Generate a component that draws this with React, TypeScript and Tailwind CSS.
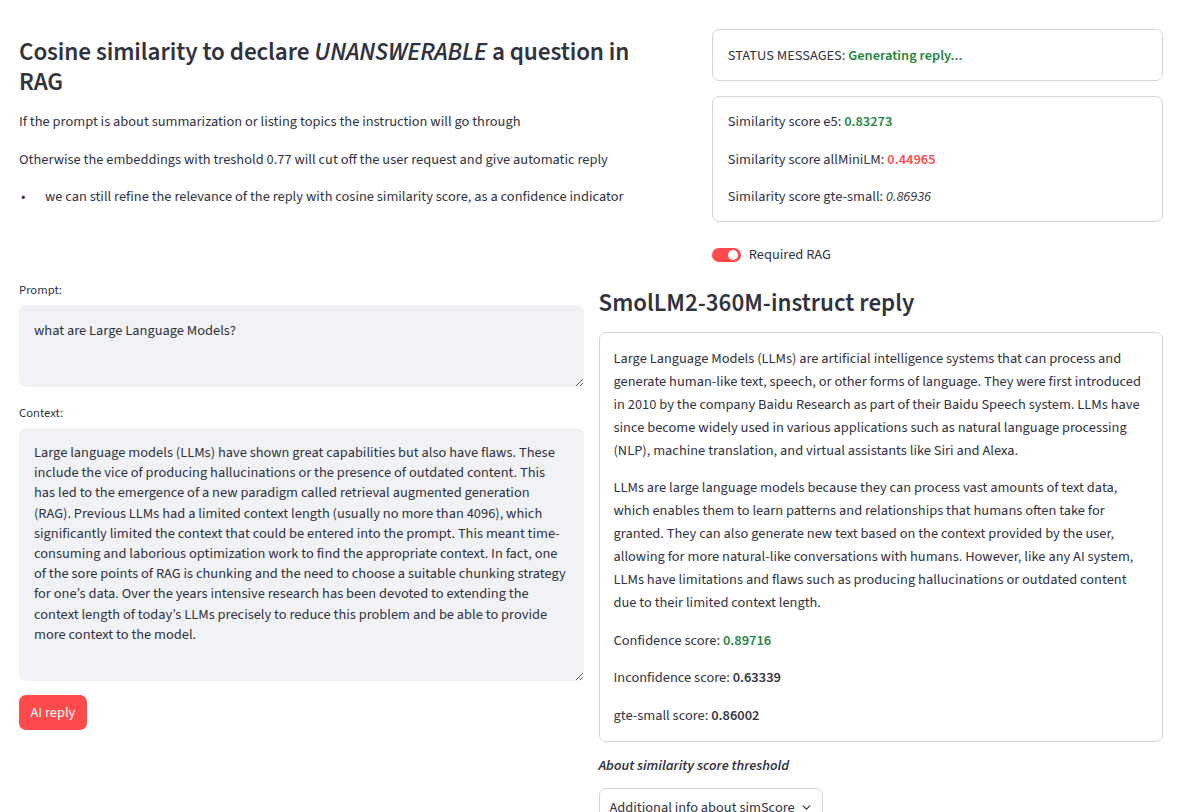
import React from 'react';
import { ChevronDown } from 'lucide-react';

const contextText = [
  "Large language models (LLMs) have shown great capabilities but also have flaws. These",
  "include the vice of producing hallucinations or the presence of outdated content. This",
  "has led to the emergence of a new paradigm called retrieval augmented generation",
  "(RAG). Previous LLMs had a limited context length (usually no more than 4096), which",
  "significantly limited the context that could be entered into the prompt. This meant time-",
  "consuming and laborious optimization work to find the appropriate context. In fact, one",
  "of the sore points of RAG is chunking and the need to choose a suitable chunking strategy",
  "for one’s data. Over the years intensive research has been devoted to extending the",
  "context length of today’s LLMs precisely to reduce this problem and be able to provide",
  "more context to the model.",
].join("\n");

const replyParas = [
  [
    "Large Language Models (LLMs) are artificial intelligence systems that can process and",
    "generate human-like text, speech, or other forms of language. They were first introduced",
    "in 2010 by the company Baidu Research as part of their Baidu Speech system. LLMs have",
    "since become widely used in various applications such as natural language processing",
    "(NLP), machine translation, and virtual assistants like Siri and Alexa.",
  ],
  [
    "LLMs are large language models because they can process vast amounts of text data,",
    "which enables them to learn patterns and relationships that humans often take for",
    "granted. They can also generate new text based on the context provided by the user,",
    "allowing for more natural-like conversations with humans. However, like any AI system,",
    "LLMs have limitations and flaws such as producing hallucinations or outdated content",
    "due to their limited context length.",
  ],
];

const Lines = ({ lines }: { lines: string[] }) => (
  <p className="leading-[23px]">
    {lines.map((l, i) => (
      <span key={i} className="block whitespace-nowrap">{l}</span>
    ))}
  </p>
);

export default function App() {
  return (
    <div className="min-h-screen bg-white text-[#31333f] font-['Source_Sans_Pro','Source_Sans_3',Lato,sans-serif] text-[14.4px]">
      <div className="pl-[19px] pr-[18px] pt-[29px]">
        {/* top row */}
        <div className="grid grid-cols-[3fr_2fr] gap-4">
          <div className="pt-[8px]">
            <h1 className="text-[25.2px] leading-[30px] font-semibold tracking-[-0.1px] whitespace-nowrap">
              Cosine similarity to declare <em>UNANSWERABLE</em> a question in
              <br />
              RAG
            </h1>
            <p className="leading-[23px] mt-[13px]">
              If the prompt is about summarization or listing topics the instruction will go through
            </p>
            <p className="leading-[23px] mt-[15px]">
              Otherwise the embeddings with treshold 0.77 will cut off the user request and give automatic reply
            </p>
            <ul className="mt-[14px] leading-[23px]">
              <li className="flex">
                <span className="w-[26px] pl-[2px]">•</span>
                <span>we can still refine the relevance of the reply with cosine similarity score, as a confidence indicator</span>
              </li>
            </ul>
          </div>

          <div className="flex flex-col">
            <div className="border border-[#d6d6d9] rounded-[7px] px-[15px] py-[13.5px] leading-[23px]">
              STATUS MESSAGES: <span className="text-[#21863b] font-semibold">Generating reply...</span>
            </div>
            <div className="mt-[15px] border border-[#d6d6d9] rounded-[7px] px-[15px] py-[13px] leading-[23px] flex flex-col gap-[14.5px]">
              <div>
                Similarity score e5: <span className="text-[#21863b] font-semibold">0.83273</span>
              </div>
              <div>
                Similarity score allMiniLM: <span className="text-[#ff4b4b] font-semibold">0.44965</span>
              </div>
              <div>
                Similarity score gte-small: <em>0.86936</em>
              </div>
            </div>
            <div className="mt-[21px] flex items-center gap-[8px] leading-[23px]">
              <span className="relative inline-block w-[29px] h-[14px] rounded-full bg-[#ff4b4b]">
                <span className="absolute right-[3px] top-[2px] w-[10px] h-[10px] rounded-full bg-white" />
              </span>
              <span>Required RAG</span>
            </div>
          </div>
        </div>

        {/* bottom row */}
        <div className="grid grid-cols-2 gap-[15px] mt-[14px]">
          <div className="flex flex-col">
            <label className="text-[12.6px] leading-[16px] mt-[2px]">Prompt:</label>
            <textarea
              className="mt-[7px] h-[82px] w-full rounded-[7px] bg-[#f0f2f6] px-[15px] py-[16px] leading-[20px] text-[#31333f] outline-none"
              defaultValue="what are Large Language Models?"
            />
            <label className="text-[12.6px] leading-[16px] mt-[18px]">Context:</label>
            <textarea
              className="mt-[7px] h-[253px] w-full rounded-[7px] bg-[#f0f2f6] px-[15px] py-[15px] leading-[20.2px] text-[#31333f] whitespace-pre overflow-hidden outline-none"
              defaultValue={contextText}
            />
            <div className="mt-[14px]">
              <button className="h-[35px] px-[11.5px] rounded-[7px] bg-[#ff4b4b] text-white leading-[20px]">
                AI reply
              </button>
            </div>
          </div>

          <div className="flex flex-col">
            <h2 className="text-[25px] leading-[30px] font-semibold mt-[8px]">
              SmolLM2-360M-instruct reply
            </h2>
            <div className="mt-[14px] border border-[#d6d6d9] rounded-[7px] px-[14px] py-[14px] flex flex-col gap-[14.4px]">
              {replyParas.map((p, i) => (
                <Lines key={i} lines={p} />
              ))}
              <p className="leading-[23px]">
                Confidence score: <span className="text-[#21863b] font-semibold">0.89716</span>
              </p>
              <p className="leading-[23px]">
                Inconfidence score: <span className="font-semibold">0.63339</span>
              </p>
              <p className="leading-[23px]">
                gte-small score: <span className="font-semibold">0.86002</span>
              </p>
            </div>
            <p className="mt-[12px] leading-[23px] italic font-semibold">About similarity score threshold</p>
            <div className="mt-[11px] self-start border border-[#d6d6d9] rounded-[7px] pl-[10px] pr-[9px] pt-[7px] pb-[10px] flex items-center gap-[5px] leading-[23px]">
              <span>Additional info about simScore</span>
              <ChevronDown size={13} strokeWidth={2.2} />
            </div>
          </div>
        </div>
      </div>
    </div>
  );
}
